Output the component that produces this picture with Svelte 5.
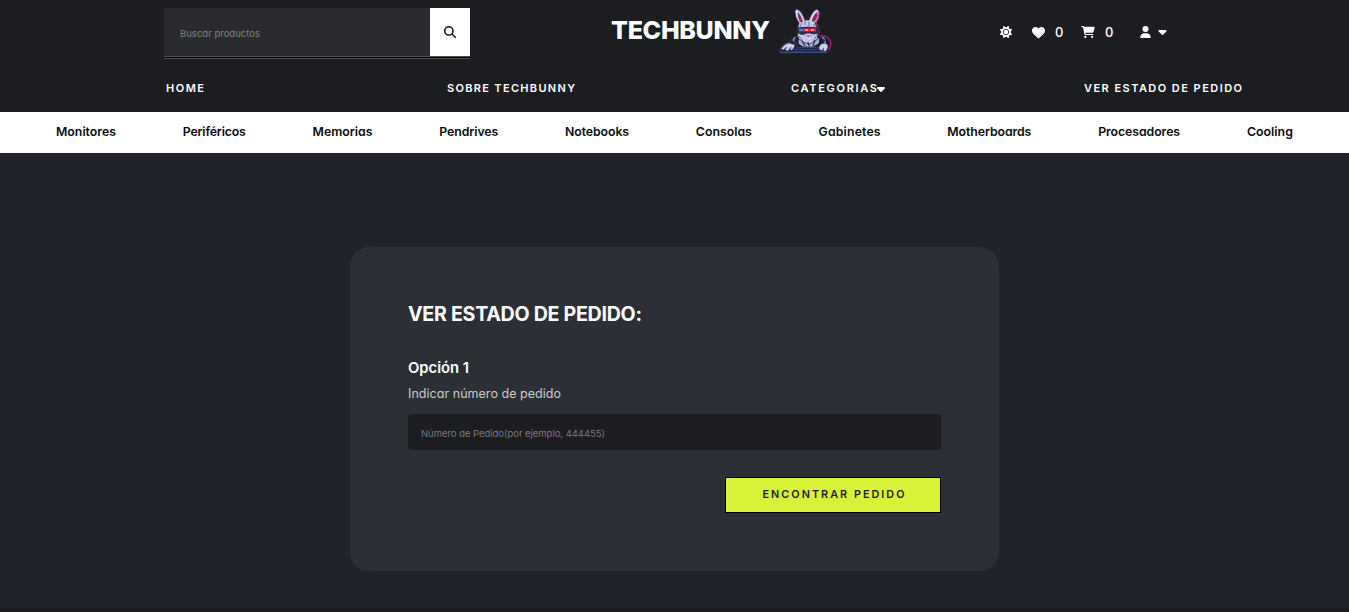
<script>
  const categories = [
    ['Monitores', 60], ['Periféricos', 63], ['Memorias', 60], ['Pendrives', 59],
    ['Notebooks', 64], ['Consolas', 56], ['Gabinetes', 62], ['Motherboards', 84],
    ['Procesadores', 82], ['Cooling', 46]
  ];

  // Spreads the letters of a label over the given measure.
  function fit(node, width) {
    const natural = node.getBoundingClientRect().width;
    const gaps = Math.max(1, node.textContent.length - 1);
    node.style.letterSpacing = `${(width - natural) / gaps}px`;
    node.style.width = `${width}px`;
  }
</script>

{#snippet caret()}
  <svg class="caret" viewBox="0 190 320 196"><path d="M137.4 374.6c12.5 12.5 32.8 12.5 45.3 0l128-128c9.2-9.2 11.9-22.9 6.9-34.9s-16.6-19.8-29.6-19.8L32 192c-12.9 0-24.6 7.8-29.6 19.8s-2.2 25.7 6.9 34.9l128 128z"/></svg>
{/snippet}

<div class="page">
  <header>
    <div class="top">
      <form class="search">
        <div class="field"><span class="fit" use:fit={80}>Buscar productos</span></div>
        <button type="button" aria-label="Buscar">
          <svg viewBox="0 0 512 512" width="12" height="12"><path d="M416 208c0 45.9-14.9 88.3-40 122.7L502.6 457.4c12.5 12.5 12.5 32.8 0 45.3s-32.8 12.5-45.3 0L330.7 376c-34.4 25.2-76.8 40-122.7 40C93.1 416 0 322.9 0 208S93.1 0 208 0S416 93.1 416 208zM208 352a144 144 0 1 0 0-288 144 144 0 1 0 0 288z"/></svg>
        </button>
      </form>
      <div class="brand">
        <span class="fit" use:fit={159}>TECHBUNNY</span>
        <svg class="bunny" viewBox="0 0 54 46" width="54" height="46">
          <path d="M1 43Q3 36 11 34Q14 29 21 28L37 27Q46 26 51 30Q54 35 53 39L49 44L4 45Z" fill="#1d203b" stroke="#7a1c4c" stroke-width=".8"/>
          <path d="M21 15Q17 9 17 4Q17 1 19 1Q24 3 27 12L31 12Q34 3 39 1Q42 2 41 7Q40 13 37 15Q40 20 40 27Q40 35 31 38Q22 37 20 30Q18 22 21 15Z" fill="#c5cde6" stroke="#34294f" stroke-width=".9"/>
          <path d="M20 4Q24 9 25 14L22 14Q19 9 20 4M39 4Q34 8 34 13L36 14Q41 9 39 4" fill="#8e2b5e"/>
          <path d="M18 3Q18 8 21 13M38 3L33 11" fill="none" stroke="#edf0fa" stroke-width="1"/>
          <path d="M41 4Q42 10 38 15Q42 20 41 25" fill="none" stroke="#dc3274" stroke-width="1"/>
          <path d="M24 15L22 19M27 12L27 17M31 14V18M35 16L37 19M21 28L25 33M39 27L35 34" stroke="#6371a0" stroke-width="1"/>
          <path d="M19 20Q29 18 41 20L40 25Q36 27 32 25L29 25Q24 28 20 25Z" fill="#35285a" stroke="#242348" stroke-width=".8"/>
          <path d="M21 22H25" stroke="#467edb" stroke-width="2.5"/>
          <path d="M25 22H38" stroke="#e8213c" stroke-width="3.2"/>
          <path d="M27 22H30M33 22H36" stroke="#ffb18c" stroke-width="1.7"/>
          <path d="M25 27L29 28L28 32L34 32L32 28L36 27" fill="#e2e5f3" stroke="#897fa9" stroke-width=".5"/>
          <path d="M28.5 27H32.5L30.5 30Z" fill="#db4f87"/>
          <path d="M20 30Q24 35 31 36Q37 35 41 29L42 35L35 39H25L19 35Z" fill="#a7b0cf" stroke="#232641" stroke-width=".8"/>
          <path d="M24 33L27 38M30 34L31 38M37 32L35 38" stroke="#30375c" stroke-width="1.3"/>
          <path d="M17 29L15 33L19 38M44 29L48 32L46 37" fill="none" stroke="#6178ab" stroke-width="2"/>
          <path d="M14 33L20 39M20 29L20 36M43 30L41 37M47 30L50 36" stroke="#12152a" stroke-width="1.3"/>
          <path d="M11 35Q6 36 3 41L5 42L9 39L7 42L10 43L13 39L12 42L15 42L17 37Z" fill="#cbd2e9" stroke="#3b3456" stroke-width=".4"/>
          <path d="M43 36Q50 34 50 39L48 43L45 43L46 40L43 43L40 41Z" fill="#cbd2e9" stroke="#3b3456" stroke-width=".4"/>
          <path d="M42 28Q51 27 53 35L51 42" fill="none" stroke="#c5225b" stroke-width="1"/>
          <path d="M17 39H40L44 44H12Z" fill="#21284d"/>
          <path d="M19 39.5H40M17 41.5H42" stroke="#a52b4d" stroke-width=".9" stroke-dasharray="1.5 1"/>
          <path d="M2 44.3H49" stroke="#345f9b" stroke-width="1.1"/>
        </svg>
      </div>
      <div class="tools">
        <svg class="sun" viewBox="0 0 512 512" width="12" height="12"><path d="M361.5 1.2c5 2.1 8.6 6.6 9.6 11.9L391 121l107.9 19.8c5.3 1 9.8 4.6 11.9 9.6s1.5 10.7-1.6 15.2L446.9 256l62.3 90.3c3.1 4.5 3.7 10.2 1.6 15.2s-6.6 8.6-11.9 9.6L391 391 371.1 498.9c-1 5.3-4.6 9.8-9.6 11.9s-10.7 1.5-15.2-1.6L256 446.9l-90.3 62.3c-4.5 3.1-10.2 3.7-15.2 1.6s-8.6-6.6-9.6-11.9L121 391 13.1 371.1c-5.3-1-9.8-4.6-11.9-9.6s-1.5-10.7 1.6-15.2L65.1 256 2.8 165.7c-3.1-4.5-3.7-10.2-1.6-15.2s6.6-8.6 11.9-9.6L121 121 140.9 13.1c1-5.3 4.6-9.8 9.6-11.9s10.7-1.5 15.2 1.6L256 65.1 346.3 2.8c4.5-3.1 10.2-3.7 15.2-1.6zM160 256a96 96 0 1 1 192 0 96 96 0 1 1 -192 0zm224 0a128 128 0 1 0 -256 0 128 128 0 1 0 256 0z"/></svg>
        <svg class="heart" viewBox="0 0 512 512" width="13" height="13"><path d="M47.6 300.4L228.3 469.1c7.5 7 17.4 10.9 27.7 10.9s20.2-3.9 27.7-10.9L464.4 300.4c30.4-28.3 47.6-68 47.6-109.5v-5.8c0-69.9-50.5-129.5-119.4-141C347 36.5 300.6 51.4 268 84L256 96 244 84c-32.6-32.6-79-47.5-124.6-39.9C50.5 55.6 0 115.2 0 185.1v5.8c0 41.5 17.2 81.2 47.6 109.5z"/></svg>
        <span class="count">0</span>
        <svg class="cart" viewBox="0 0 576 512" width="14" height="12"><path d="M0 24C0 10.7 10.7 0 24 0H69.5c22 0 41.5 12.8 50.6 32h411c26.3 0 45.5 25 38.6 50.4l-41 152.3c-8.5 31.4-37 53.3-69.5 53.3H170.7l5.4 28.5c2.2 11.3 12.1 19.5 23.6 19.5H488c13.3 0 24 10.7 24 24s-10.7 24-24 24H199.7c-34.6 0-64.3-24.6-70.7-58.5L77.4 54.5c-.7-3.8-4-6.5-7.9-6.5H24C10.7 48 0 37.3 0 24zM128 464a48 48 0 1 1 96 0 48 48 0 1 1 -96 0zm336-48a48 48 0 1 1 0 96 48 48 0 1 1 0-96z"/></svg>
        <span class="count">0</span>
        <svg class="user" viewBox="0 0 448 512" width="11" height="12"><path d="M224 256A128 128 0 1 0 224 0a128 128 0 1 0 0 256zm-45.7 48C79.8 304 0 383.8 0 482.3C0 498.7 13.3 512 29.7 512H418.3c16.4 0 29.7-13.3 29.7-29.7C448 383.8 368.2 304 269.7 304H178.3z"/></svg>
        {@render caret()}
      </div>
    </div>
    <nav class="main-nav">
      <span class="fit" use:fit={38}>HOME</span>
      <span class="fit about" use:fit={128}>SOBRE TECHBUNNY</span>
      <span class="with-caret"><span class="fit" use:fit={86}>CATEGORIAS</span>{@render caret()}</span>
      <span class="fit status" use:fit={158}>VER ESTADO DE PEDIDO</span>
    </nav>
  </header>
  <nav class="categories">
    {#each categories as [name, width]}
      <span class="fit" use:fit={width}>{name}</span>
    {/each}
  </nav>
  <main>
    <section class="card">
      <h1><span class="fit" use:fit={234}>VER ESTADO DE PEDIDO:</span></h1>
      <h2><span class="fit" use:fit={61}>Opción 1</span></h2>
      <p><span class="fit" use:fit={153}>Indicar número de pedido</span></p>
      <div class="order"><span class="fit" use:fit={184}>Número de Pedido(por ejemplo, 444455)</span></div>
      <button class="find" type="button"><span class="fit" use:fit={142}>ENCONTRAR PEDIDO</span></button>
    </section>
  </main>
  <footer></footer>
</div>

<style>
  :global(body) { margin: 0; background: #21232b; }
  .page { height: 612px; display: flex; flex-direction: column; overflow: hidden; font-family: Inter, sans-serif; font-feature-settings: "cv11"; color: #fff; }
  .page * { box-sizing: border-box; }
  svg { display: block; fill: currentColor; flex: none; }
  .fit { display: inline-block; white-space: nowrap; flex: none; }
  header { height: 112px; flex: none; background: #1c1d21; }
  .top { height: 64px; display: flex; align-items: flex-start; padding: 8px 0 0 164px; }
  .search { width: 306px; height: 51px; display: flex; flex: none; background: linear-gradient(#2a2b2e 48px, #505152 48px 49px, #000 49px 50px, #505152 50px); }
  .field { width: 266px; height: 48px; padding: 3px 0 0 16px; display: flex; align-items: center; font-size: 9.5px; color: #818284; }
  .search button { width: 40px; height: 48px; border: 0; padding: 0; background: #fff; color: #111; display: grid; place-items: center; }
  .brand { margin-left: 141px; width: 221px; display: flex; align-items: flex-start; font-size: 25px; font-weight: 800; line-height: 44px; }
  .bunny { margin-left: 8px; }
  .tools { margin-left: 168px; height: 48px; display: flex; align-items: center; }
  .heart { margin-left: 20px; }
  .count { width: 9px; margin-left: 10px; font-size: 13px; font-weight: 500; line-height: 20px; }
  .cart { margin-left: 17px; }
  .user { margin-left: 26px; }
  .caret { width: 9px; height: 5px; }
  .tools .caret { margin: 1px 0 0 7px; }
  .main-nav { height: 48px; padding-left: 166px; display: flex; align-items: center; font-size: 11px; font-weight: 600; }
  .about { margin-left: 243px; }
  .with-caret { margin-left: 216px; display: flex; align-items: center; }
  .with-caret .caret { width: 8px; margin-top: 2px; }
  .status { margin-left: 199px; }
  .categories { height: 41px; flex: none; padding: 0 56px 2px; background: #fff; color: #0b0b0d; display: flex; justify-content: space-between; align-items: center; font-size: 12.3px; font-weight: 600; }
  main { flex: 1; background: #21232b; padding-top: 94px; }
  .card { width: 649px; height: 324px; margin: 0 auto; padding: 52px 58px 58px; border-radius: 19px; background: #2c2f36; display: flex; flex-direction: column; }
  h1, h2, p { margin: 0; }
  h1 { height: 30px; line-height: 30px; font-size: 19.6px; font-weight: 700; }
  h2 { height: 24px; line-height: 24px; margin-top: 27px; font-size: 14.8px; font-weight: 600; }
  p { height: 20px; line-height: 20px; margin-top: 4px; font-size: 12.5px; color: #c9cacc; }
  .order { height: 36px; flex: none; margin-top: 10px; padding: 2px 13px 0; display: flex; align-items: center; border-radius: 4px; background: #1c1d21; font-size: 9.5px; color: #7b7c7e; }
  .find { width: 216px; height: 36px; margin: 27px 0 0 auto; padding: 0 0 2px 1px; border: 1px solid #000; background: #d8f238; color: #1c1d21; display: flex; align-items: center; justify-content: center; font: 600 10.8px Inter, sans-serif; }
  footer { height: 4px; flex: none; background: #1c1d21; }
</style>
